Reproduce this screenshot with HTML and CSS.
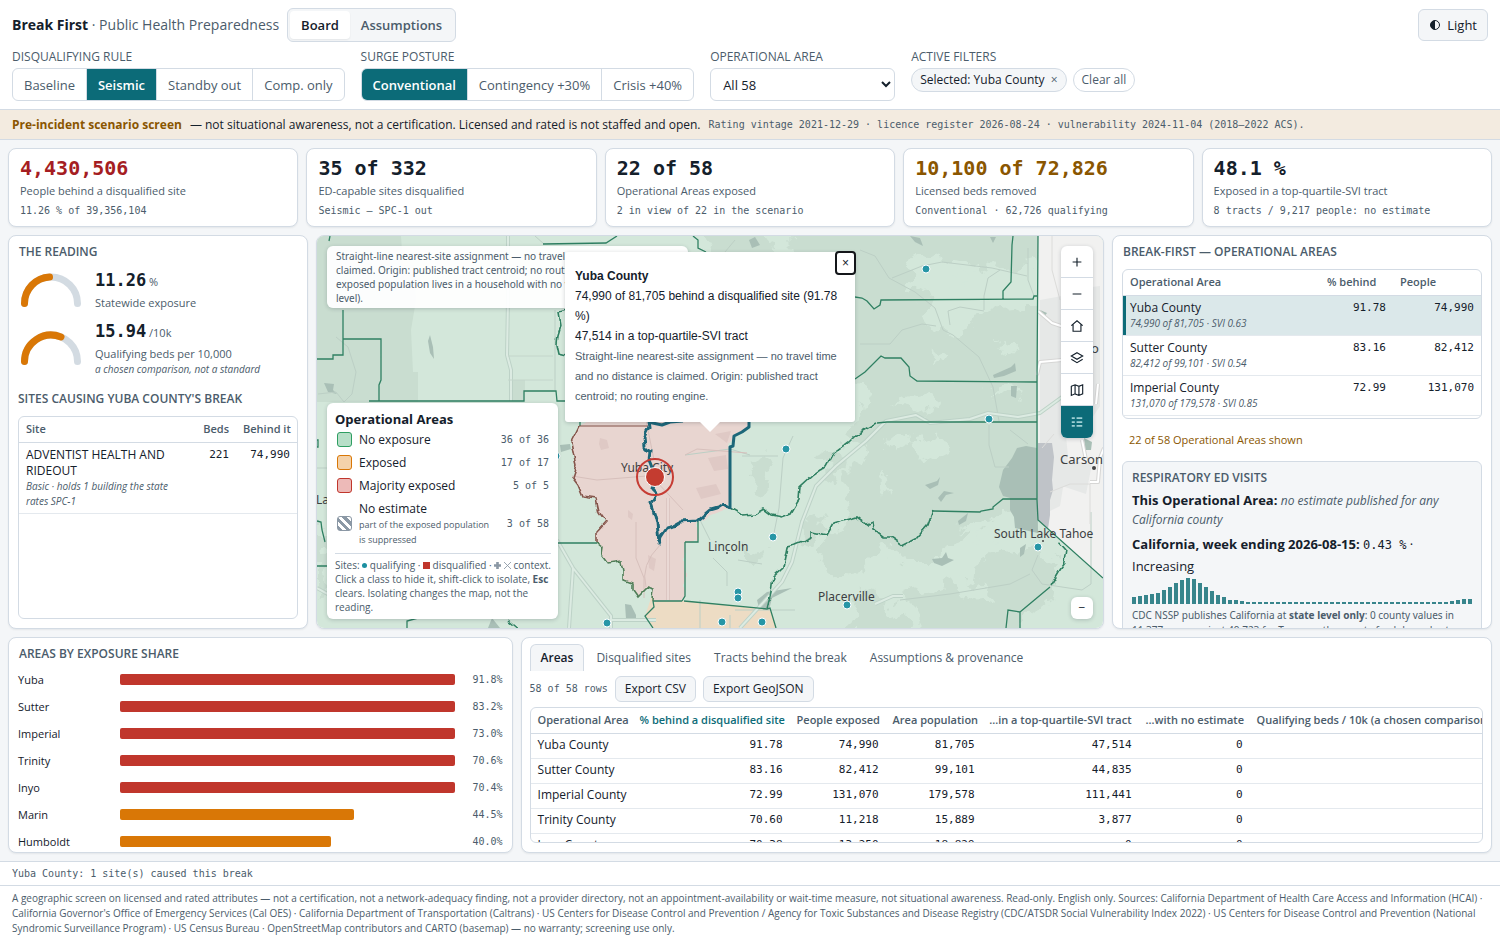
FILE: index.html
```html
<!DOCTYPE html>
<html lang="en">
<head>
<meta charset="utf-8">
<title>Break First · Public Health Preparedness</title>
<link rel="stylesheet" href="styles.css">
</head>
<body>
<header class="top">
  <div class="top-row">
    <h1 class="brand"><b>Break First</b> · Public Health Preparedness</h1>
    <nav class="switch"><button class="on">Board</button><button>Assumptions</button></nav>
    <button class="theme"><svg width="12" height="12" viewBox="0 0 12 12"><circle cx="6" cy="6" r="4.5" fill="none" stroke="currentColor"/><path d="M6 1.5a4.500 4.500 0 0 0 0 9z" fill="currentColor"/></svg>Light</button>
  </div>
  <div class="filters">
    <div class="field" role="group" aria-labelledby="l1"><span class="label" id="l1">DISQUALIFYING RULE</span>
      <div class="seg"><button>Baseline</button><button class="on">Seismic</button><button>Standby out</button><button>Comp. only</button></div></div>
    <div class="field" role="group" aria-labelledby="l2"><span class="label" id="l2">SURGE POSTURE</span>
      <div class="seg"><button class="on">Conventional</button><button>Contingency +30%</button><button>Crisis +40%</button></div></div>
    <div class="field"><label class="label" for="area">OPERATIONAL AREA</label>
      <select id="area" class="select"><option>All 58</option></select></div>
    <div class="field"><span class="label">ACTIVE FILTERS</span>
      <div class="chips"><button class="chip">Selected: Yuba County <span class="x">×</span></button><button class="chip clear">Clear all</button></div></div>
  </div>
</header>
<p class="banner"><b>Pre-incident scenario screen</b><span>— not situational awareness, not a certification. Licensed and rated is not staffed and open.</span><span class="mono">Rating vintage 2021-12-29 · licence register 2026-08-24 · vulnerability 2024-11-04 (2018–2022 ACS).</span></p>

<main class="board">
  <section class="kpis">
    <div class="card kpi"><strong class="red">4,430,506</strong><span>People behind a disqualified site</span><small>11.26 % of 39,356,104</small></div>
    <div class="card kpi"><strong>35 of 332</strong><span>ED-capable sites disqualified</span><small>Seismic — SPC-1 out</small></div>
    <div class="card kpi"><strong>22 of 58</strong><span>Operational Areas exposed</span><small>2 in view of 22 in the scenario</small></div>
    <div class="card kpi"><strong class="amber">10,100 of 72,826</strong><span>Licensed beds removed</span><small>Conventional · 62,726 qualifying</small></div>
    <div class="card kpi"><strong>48.1 %</strong><span>Exposed in a top-quartile-SVI tract</span><small>8 tracts / 9,217 people: no estimate</small></div>
  </section>

  <section class="middle">
    <div class="card reading">
      <h2>THE READING</h2>
      <div class="gauge">
        <svg width="60" height="35" viewBox="0 0 60 35" fill="none" stroke-width="7" stroke-linecap="round"><path d="M3.500 30.500a26.500 26.500 0 0 1 53 0" stroke="#d3dbe2"/><path d="M3.500 30.500a26.500 26.500 0 0 1 25-26.500" stroke="#d97706"/></svg>
        <div><p><strong>11.26</strong> %</p><p>Statewide exposure</p></div>
      </div>
      <div class="gauge">
        <svg width="60" height="35" viewBox="0 0 60 35" fill="none" stroke-width="7" stroke-linecap="round"><path d="M3.500 30.500a26.500 26.500 0 0 1 53 0" stroke="#d3dbe2"/><path d="M3.500 30.500a26.500 26.500 0 0 1 36.500-24.500" stroke="#d97706"/></svg>
        <div><p><strong>15.94</strong> /10k</p><p>Qualifying beds per 10,000</p><p class="em">a chosen comparison, not a standard</p></div>
      </div>
      <h2 class="sites-title">SITES CAUSING YUBA COUNTY'S BREAK</h2>
      <div class="table-box grow">
        <table class="sites">
          <thead><tr><th>Site</th><th class="c-beds">Beds</th><th class="c-behind">Behind it</th></tr></thead>
          <tbody><tr><td>ADVENTIST HEALTH AND RIDEOUT<span class="em">Basic · holds 1 building the state rates SPC-1</span></td><td>221</td><td>74,990</td></tr></tbody>
        </table>
      </div>
    </div>

    <div class="card map">
      <svg class="basemap" viewBox="317 236 786 392" preserveAspectRatio="xMidYMid slice">
        <defs>
          <filter id="rough" x="-5%" y="-5%" width="110%" height="110%" color-interpolation-filters="sRGB"><feTurbulence type="fractalNoise" baseFrequency="0.05" numOctaves="4" seed="4"/><feDisplacementMap in="SourceGraphic" scale="34" xChannelSelector="R" yChannelSelector="G"/></filter>
          <filter id="river" filterUnits="userSpaceOnUse" x="317" y="236" width="786" height="392" color-interpolation-filters="sRGB"><feTurbulence type="fractalNoise" baseFrequency="0.1" numOctaves="1" seed="8"/><feDisplacementMap in="SourceGraphic" scale="8" xChannelSelector="R" yChannelSelector="G"/></filter>
        </defs>
        <rect x="317" y="236" width="786" height="392" fill="#d3e7da"/>
        <path d="M317 236H401L403 265H414L416 300 411 330 413 372H418V402H317Z" fill="#c9ddd0"/>
        <path d="M513 380H525V401H513Z" fill="#c9ddd0"/>
        <g fill="#c9ddd0" filter="url(#rough)">
          <path d="M795 225H1045V262L1000 268 950 262 920 250 905 285 930 300 925 325 960 335 975 310 1045 305V505L1000 510 985 530 940 560 905 560 880 545 860 570 830 575 815 550 850 520 840 485 870 455 850 440 865 400 840 370 850 320 800 300Z"/>
          <path d="M1000 545 1060 560 1050 600 1000 640H940L900 600 960 580ZM860 590l30 10 20 30h-60zM700 225h60l20 30h-60zM755 455l20 20-10 20-15-10zM745 540l20 10-10 15zM800 520l20-5 10 15-25 15zM820 455l20-10 10 25-20 10z"/>
          <path d="M317 520l14 10-6 60-8 10z"/>
        </g>
        <g fill="#d3e7da" filter="url(#rough)">
          <path d="M880 440l20-8 15 10-20 15zM915 440l25-6 5 15-25 12zM958 275l20-8 40 8 5 15-50 10-20-5zM890 400l30-5 20 8-20 12zM960 530l30-8 20 10-25 10zM985 395l20-10 15 15zM880 470l12 10-10 20zM950 575l30 5 10 20-30-5zM1000 340l12 10-8 12zM935 345l10 8-12 15z"/>
        </g>
        <path d="M654 589 653 601 684 601 767 609 770 608 776 628H653L645 616Z" fill="#eddcc4"/>
        <path filter="url(#river)" d="M579 426 571 442 574 457 576 465 572 477 578 485 583 497 596 499 599 512 606 522 597 532 597 543 603 548 602 555 608 563 622 561 624 570 624 580 632 583 632 590 637 597 647 587 654 589 653 601H682L685 596V542H698V521L730 508V447L733 435 749 427V415H600Z" fill="#e8d5d0"/>
        <g fill="#dfc9c5"><path d="M600 438l7 2 2 8-8 2-2-6zM628 510l5 4-1 6-4-3zM708 458l18-3 2 14-14 2zM696 488l20-4 5 10-20 5zM715 434l16-3-4 12zM648 555l8 4-2 12-5-3z"/></g>
        <path d="M1038 236H1103V578L1038 520Z" fill="#f1f1f0"/>
        <g fill="#e6e8e7"><path d="M1040 300l22-4 8 60-8 40 6 60-8 50-20 10zM1070 290l30-4v120l-20 30-12-50zM1062 460l30 4-6 30-24-8z"/></g>
        <path d="M1037 448 1026 446 1017 448 1012 458 1003 470 999 487 1003 496 1010 498 1010 510 1014 517 1015 528 1038 533Z" fill="#a9bfb6"/>
        <path d="M1038 443 1052 443 1054 457 1052 480 1053 490 1050 500V515L1048 529 1038 520Z" fill="#bfc3c8"/>
        <g fill="#a9bfb6">
          <path d="M430 335l3 12 1 12-4-6-2-12zM324 383l10 1-1 6 4 4-9-2zM993 375l18-8 4-4 1 8-12 5-10 2zM1011 386l6 0-1 12-5-2zM925 485l12-4 3-4-2 8-8 4zM938 498l6-7 10 2-8 2-5 7zM958 521l10-8-2 8-7 4zM932 559l10-1 4-6 2 6 6 2-12 6-8-3zM1020 548l6-4-2 10-4 3zM749 240l6-3 5 8-8 3zM910 236l10 2 3 8-8-4zM990 237h6l-3 6zM757 600l10-8 25-4-20 10-3 12-10-2zM625 604l6 1 5 10v4h-10zM560 445l10-1 1 5-10 3zM492 618l8 10h-12zM1040 310l7 3-3 4zM1084 438l8 4-1 8h-6z"/>
        </g>
        <g fill="none" stroke="#bccfc5" stroke-width="1">
          <path d="M336 337l12 10 8 25-4 22-8 8-8-10-18 2M317 468l16 0M535 236l9 8M860 250l15 6 14 22 26 14 20 16 8 22 10 5 26 22 14 30 6 34M892 278l30-12 20-4 50 6 35 8M984 310v-14l4-18 12-8M860 344l30 0 12-14 20-6 14 2M950 325l-2-14 12-4 24 4M1028 248v32l6 16M989 425l0 20 6 22 14 0M1010 430l18 14M793 436l-10 22-4 50-6 30M685 455l45-6 20 6M742 456h36M700 520l10 20M713 558l14 14v14M555 310v80M735 240l-10 12M900 600l50-6 60-10 20-10M1038 555l-6 15 10 14 40 6 9-6V512M738 560l24 4M735 610h60M730 615v15M700 600v30"/>
        </g>
        <g fill="none" stroke="#d7c0bc"><path d="M572 476l25 4 50-4M636 522v36l8 20v20M668 498v102M654 460l-8-40M655 480l28 30M685 455l12-6 50 4M660 545q-20 20-14 42"/></g>
        <g fill="none" stroke-linejoin="round">
          <path d="M508 236V300L507 355 511 370V401M557 540l16 28 38 48v12M573 568l-4 60M740 628l20-22 22-24 10-20 10-40 14-36 20-20 30-25 20-20 30-6 14 8 40-4 18-6 30 4 22-4 22-16 12-6-4-20 10-6M611 620h45M317 588l25 14M875 604l18-8h10" stroke="#bdd2c7" stroke-width="4"/>
          <path d="M508 236V300L507 355 511 370V401M557 540l16 28 38 48v12M573 568l-4 60M740 628l20-22 22-24 10-20 10-40 14-36 20-20 30-25 20-20 30-6 14 8 40-4 18-6 30 4 22-4 22-16 12-6-4-20 10-6M611 620h45M317 588l25 14M875 604l18-8h10" stroke="#dcebe2" stroke-width="2"/>
          <path d="M508 380h45M508 356h45" stroke="#c4d6cb"/>
          <path d="M668 498v102" stroke="#dcc6c2" stroke-width="4"/><path d="M668 498v102" stroke="#ead9d5" stroke-width="2"/>
          <path d="M1038 311l14 12 12 4M1037 375l3-13 22-2M1082 440l4 20M1098 384l-2 20M1090 482h8l2-24 4-10" stroke="#d6d6d5" stroke-width="4"/>
          <path d="M1038 311l14 12 12 4M1037 375l3-13 22-2M1082 440l4 20M1098 384l-2 20M1090 482h8l2-24 4-10" stroke="#fff" stroke-width="2"/>
          <path d="M1042 448l12-14M1050 492l20-8 20 0v40M1060 300l-8-30V236" stroke="#dcdcda"/>
        </g>
        <g fill="none" stroke="#2f8062" stroke-width="1.300">
          <path d="M329 241 330 236M343 310V339H381V380L379 385V401M343 339V355H333V359H317M369 401H524V391H556L557 401H580V426M543 244 606 243 617 236M557 543H597M317 566H327M407 628V621L418 618M317 440h1v7h-1M317 521l4 1 1 8 3 12"/>
          <path d="M693 236 698 240V248L706 252M855 297 862 298 867 301 874 309 880 305 881 300 1033 299 1034 296H1037M1013 236 1012 245 1011 282 1003 291V299M855 379 865 372 881 356 885 358H901L909 367 910 376 917 381 1037 382M877 423 887 422H1037M933 511 980 512 981 511 993 509V507L1003 499H1037M1038 236 1037 383V500L1038 520 1103 578M1020 612V628M1020 612 1050 587M1020 612 1008 610 1006 628M685 542H698V521M682 601H653M684 601 767 609 770 608 776 628M653 601 654 607 645 616 653 628M685 542V596L682 601"/>
          <path filter="url(#river)" stroke-width="1.600" d="M567 311 559 313 561 325 558 335 557 345 559 354 567 356M508 620l12 10M730 508 737 512 743 516 753 515 764 509 772 515 782 517 790 514 799 499 800 487 813 475 827 465 833 454 848 443 857 434 877 423M767 609 771 593 773 577 783 568 787 547 795 545 812 538V532L827 535 833 524 857 517 868 525 873 523 874 530 883 537H890L903 546 915 540 928 525 933 511M1060 542 1067 550 1065 563 1060 570 1050 587"/>
        </g>
        <path d="M597 543 603 548 602 555 608 563 622 561 624 570 624 580 632 583 632 590 637 597 647 587 654 589 653 601" fill="none" stroke="#4f7d57" stroke-width="1.600" filter="url(#river)"/>
        <path d="M579 426 571 442 574 457 576 465 572 477 578 485 583 497 596 499 599 512 606 522 597 532 597 543" fill="none" stroke="#85554b" stroke-width="1.600" filter="url(#river)"/>
        <path d="M579 426H648" stroke="#85554b" fill="none"/>
        <g fill="#3d3f42" class="town"><text x="621" y="472">Yuba City</text><text x="708" y="551">Lincoln</text><text x="818" y="601">Placerville</text><text x="994" y="538">South Lake Tahoe</text><text x="1060" y="464" class="big">Carson</text><text x="316" y="504">La</text><text x="1091" y="353" class="big">o</text></g>
        <circle cx="1094" cy="468" r="2" fill="#444"/><circle cx="727" cy="553" r="1" fill="#444"/><circle cx="1043" cy="541" r="1" fill="#444"/>
        <g fill="none" stroke="#1c6779" stroke-width="3" stroke-linejoin="round">
          <path filter="url(#river)" d="M648 420 649 427 644 437 645 447 650 452 649 460 653 470 655 477 652 488 657 493 651 503 655 515 657 523 659 543 661 537 667 528 673 526 680 522 697 521 710 510 717 508 723 504 730 508"/>
          <path d="M730 509V447L733 446 734 436 742 432 749 427V420M648 422 662 425 670 422 683 421"/>
        </g>
        <g fill="#2796a6" stroke="#fff"><circle cx="926" cy="269" r="4"/><circle cx="786" cy="449" r="4"/><circle cx="989" cy="419" r="4"/><circle cx="773" cy="537" r="4"/><circle cx="738" cy="592" r="4"/><circle cx="738" cy="598" r="4"/><circle cx="607" cy="623" r="4"/><circle cx="722" cy="622" r="4"/><circle cx="762" cy="622" r="4"/><circle cx="847" cy="605" r="4"/><circle cx="1038" cy="547" r="4"/><circle cx="556" cy="456" r="4"/></g>
        <circle cx="655" cy="477" r="18" fill="none" stroke="#c63c34" stroke-width="2"/><circle cx="655" cy="477" r="9.500" fill="#c43c30" stroke="#fff"/>
      </svg>
      <p class="map-note">Straight-line nearest-site assignment — no travel time and no distance is<br>claimed. Origin: published tract centroid; no routing engine. 6 % of the<br>exposed population lives in a household with no vehicle (county<br>level).</p>
      <div class="popup">
        <h3>Yuba County</h3>
        <p>74,990 of 81,705 behind a disqualified site (91.78 %)</p>
        <p>47,514 in a top-quartile-SVI tract</p>
        <p class="fine">Straight-line nearest-site assignment — no travel time and no distance is claimed. Origin: published tract centroid; no routing engine.</p>
        <button class="close" aria-label="Close">×</button>
      </div>
      <div class="legend">
        <h3>Operational Areas</h3>
        <button class="key"><i class="sw none"></i><span>No exposure</span><small>36 of 36</small></button>
        <button class="key"><i class="sw exposed"></i><span>Exposed</span><small>17 of 17</small></button>
        <button class="key"><i class="sw major"></i><span>Majority exposed</span><small>5 of 5</small></button>
        <button class="key"><i class="sw hatch"></i><span>No estimate<em>part of the exposed population<br>is suppressed</em></span><small>3 of 58</small></button>
        <p>Sites: <i class="dot"></i> qualifying · <i class="square"></i> disqualified · <svg width="7" height="7" viewBox="0 0 8 8"><path d="M4 0v8M0 4h8" stroke="#8b98a5" stroke-width="3"/></svg> <svg width="7" height="7" viewBox="0 0 8 8"><path d="M0 0l8 8M8 0L0 8" stroke="#8b98a5"/></svg> context.<br>Click a class to hide it, shift-click to isolate, <b>Esc</b><br>clears. Isolating changes the map, not the<br>reading.</p>
      </div>
      <div class="tools">
        <button aria-label="Zoom in"><svg viewBox="0 0 16 16"><path d="M8 3v10M3 8h10"/></svg></button>
        <button aria-label="Zoom out"><svg viewBox="0 0 16 16"><path d="M3 8h10"/></svg></button>
        <button aria-label="Home"><svg viewBox="0 0 16 16"><path d="M1.500 7.500 8 2l6.500 5.500M3.500 6V14h9V6"/></svg></button>
        <button aria-label="Layers"><svg viewBox="0 0 16 16"><path d="M8 2 14.500 5.800 8 9.500 1.500 5.800ZM1.500 9.500 8 13.300l6.500-3.800"/></svg></button>
        <button aria-label="Basemap"><svg viewBox="0 0 16 16"><path d="M1.500 3.800l4.300-1.800 4.400 1.800 4.300-1.800v10.400l-4.300 1.800-4.400-1.800-4.300 1.800ZM5.800 2v10.400M10.200 3.800v10.400"/></svg></button>
        <button class="on" aria-label="Legend"><svg viewBox="0 0 16 16"><path d="M2 3.500h3.500M7.500 3.500H14M2 8h3.500M7.500 8H14M2 12.500h3.500M7.500 12.500H14"/></svg></button>
      </div>
      <button class="collapse" aria-label="Collapse">−</button>
    </div>

    <div class="card ranking">
      <h2>BREAK-FIRST — OPERATIONAL AREAS</h2>
      <div class="table-box rank-box">
        <table class="rank">
          <thead><tr><th>Operational Area</th><th class="c-pct">% behind</th><th class="c-people">People</th></tr></thead>
          <tbody>
            <tr class="sel"><td>Yuba County<span class="em">74,990 of 81,705 · SVI 0.63</span></td><td>91.78</td><td>74,990</td></tr>
            <tr><td>Sutter County<span class="em">82,412 of 99,101 · SVI 0.54</span></td><td>83.16</td><td>82,412</td></tr>
            <tr><td>Imperial County<span class="em">131,070 of 179,578 · SVI 0.85</span></td><td>72.99</td><td>131,070</td></tr>
          </tbody>
        </table>
      </div>
      <p class="shown">22 of 58 Operational Areas shown</p>
      <div class="resp">
        <h2>RESPIRATORY ED VISITS</h2>
        <p><b>This Operational Area:</b> <span class="em">no estimate published for any California county</span></p>
        <p class="week"><b>California, week ending 2026-08-15:</b> <span class="mono">0.43 %</span> ·<br>Increasing</p>
        <div class="spark"><i style="height:7px"></i><i style="height:8px"></i><i style="height:9px"></i><i style="height:10px"></i><i style="height:11px"></i><i style="height:14px"></i><i style="height:17px"></i><i style="height:21px"></i><i style="height:24px"></i><i style="height:26px"></i><i style="height:25px"></i><i style="height:21px"></i><i style="height:17px"></i><i style="height:13px"></i><i style="height:9px"></i><i style="height:7px"></i><i style="height:4px"></i><i style="height:4px"></i><i style="height:3px"></i><i></i><i></i><i></i><i></i><i></i><i></i><i></i><i></i><i></i><i></i><i></i><i></i><i></i><i></i><i></i><i></i><i></i><i></i><i></i><i></i><i></i><i></i><i></i><i></i><i></i><i></i><i></i><i></i><i></i><i></i><i></i><i></i><i></i><i></i><i style="height:3px"></i><i style="height:4px"></i><i style="height:5px"></i><i style="height:5px"></i></div>
        <p class="src">CDC NSSP publishes California at <b>state level only</b>: 0 county values in 11,377 rows against 49,723 for Texas, so the county feed degrades to the state figure.</p>
      </div>
    </div>
  </section>

  <section class="lower">
    <div class="card shares">
      <h2>AREAS BY EXPOSURE SHARE</h2>
      <div class="bar"><span>Yuba</span><div><i style="width:100%"></i></div><small>91.8%</small></div>
      <div class="bar"><span>Sutter</span><div><i style="width:100%"></i></div><small>83.2%</small></div>
      <div class="bar"><span>Imperial</span><div><i style="width:100%"></i></div><small>73.0%</small></div>
      <div class="bar"><span>Trinity</span><div><i style="width:100%"></i></div><small>70.6%</small></div>
      <div class="bar"><span>Inyo</span><div><i style="width:100%"></i></div><small>70.4%</small></div>
      <div class="bar mid"><span>Marin</span><div><i style="width:70%"></i></div><small>44.5%</small></div>
      <div class="bar mid"><span>Humboldt</span><div><i style="width:63%"></i></div><small>40.0%</small></div>
    </div>
    <div class="card data">
      <nav class="tabs"><button class="on">Areas</button><button>Disqualified sites</button><button>Tracts behind the break</button><button>Assumptions &amp; provenance</button></nav>
      <div class="actions"><span class="mono">58 of 58 rows</span><button>Export CSV</button><button>Export GeoJSON</button></div>
      <div class="table-box grow">
        <table class="areas">
          <colgroup><col class="w1"><col class="w2"><col class="w3"><col class="w3"><col class="w2"><col class="w4"><col class="w5"></colgroup>
          <thead><tr><th>Operational Area</th><th class="sorted">% behind a disqualified site</th><th>People exposed</th><th>Area population</th><th>…in a top-quartile-SVI tract</th><th>…with no estimate</th><th>Qualifying beds / 10k (a chosen comparison)</th></tr></thead>
          <tbody>
            <tr><td>Yuba County</td><td>91.78</td><td>74,990</td><td>81,705</td><td>47,514</td><td>0</td><td></td></tr>
            <tr><td>Sutter County</td><td>83.16</td><td>82,412</td><td>99,101</td><td>44,835</td><td>0</td><td></td></tr>
            <tr><td>Imperial County</td><td>72.99</td><td>131,070</td><td>179,578</td><td>111,441</td><td>0</td><td></td></tr>
            <tr><td>Trinity County</td><td>70.60</td><td>11,218</td><td>15,889</td><td>3,877</td><td>0</td><td></td></tr>
            <tr><td>Inyo County</td><td>70.38</td><td>13,250</td><td>18,829</td><td>0</td><td>0</td><td></td></tr>
          </tbody>
        </table>
      </div>
    </div>
  </section>
</main>
<p class="status">Yuba County: 1 site(s) caused this break</p>
<footer class="foot">A geographic screen on licensed and rated attributes — not a certification, not a network-adequacy finding, not a provider directory, not an appointment-availability or wait-time measure, not situational awareness. Read-only. English only. Sources: California Department of Health Care Access and Information (HCAI) · California Governor's Office of Emergency Services (Cal OES) · California Department of Transportation (Caltrans) · US Centers for Disease Control and Prevention / Agency for Toxic Substances and Disease Registry (CDC/ATSDR Social Vulnerability Index 2022) · US Centers for Disease Control and Prevention (National Syndromic Surveillance Program) · US Census Bureau · OpenStreetMap contributors and CARTO (basemap) — no warranty; screening use only.</footer>
</body>
</html>
```
FILE: styles.css
```css
:root {
  --ink: #14202b;
  --muted: #4b5c6b;
  --line: #d3dbe4;
  --teal: #0c6b78;
  --soft: #f4f6f8;
  --sans: "Open Sans", "Noto Sans", sans-serif;
  --mono: "DejaVu Sans Mono", monospace;
}
* { box-sizing: border-box; margin: 0; }
body { height: 100vh; display: flex; flex-direction: column; overflow: hidden; font: 12px/16px var(--sans); color: var(--ink); background: var(--soft); }
button { font: inherit; color: inherit; background: none; border: 0; padding: 0; cursor: pointer; white-space: nowrap; }
h2 { font-size: 12px; line-height: 16px; font-weight: 600; color: var(--muted); white-space: nowrap; }
.mono { font-family: var(--mono); font-size: 10px; }
.em { font-size: 10px; font-style: italic; color: var(--muted); }

.top { padding: 8px 12px; background: #fff; border-bottom: 1px solid var(--line); }
.top-row { display: flex; align-items: center; gap: 8px; }
.brand { font-size: 14px; line-height: 20px; font-weight: 400; color: var(--muted); }
.brand b { color: var(--ink); }
.switch { display: flex; padding: 2px; border: 1px solid var(--line); border-radius: 6px; background: var(--soft); }
.switch button { padding: 0 11px; height: 28px; font-size: 13px; font-weight: 600; color: var(--muted); border-radius: 4px; }
.switch .on { background: #fff; color: var(--ink); box-shadow: 0 1px 2px #0001; }
.theme { display: flex; align-items: center; gap: 6px; margin-left: auto; height: 32px; padding: 0 10px; font-size: 13px; border: 1px solid var(--line); border-radius: 6px; background: var(--soft); }
.filters { display: flex; gap: 16px; margin-top: 7px; }
.field { display: flex; flex-direction: column; gap: 3px; }
.label { font-size: 12px; line-height: 16px; color: var(--muted); }
.seg { display: flex; border: 1px solid var(--line); border-radius: 6px; overflow: hidden; }
.seg button { height: 31px; padding: 0 11px; font-size: 13px; color: var(--muted); }
.seg button + button { border-left: 1px solid var(--line); }
.seg .on { background: var(--teal); color: #fff; font-weight: 600; }
.select { width: 185px; height: 33px; padding: 0 8px; font: 13px/20px var(--sans); color: var(--ink); background: #fff; border: 1px solid var(--line); border-radius: 6px; }
.chips { display: flex; gap: 6px; }
.chip { height: 24px; padding: 0 8px; font-size: 12px; border: 1px solid var(--line); border-radius: 12px; background: var(--soft); }
.chip .x { margin-left: 3px; color: var(--muted); }
.clear { background: #fff; color: var(--muted); }

.banner { display: flex; align-items: center; gap: 8px; padding: 7px 12px 6px; background: #f3ebe0; border-bottom: 1px solid var(--line); white-space: nowrap; }
.banner b { color: #8a5600; }
.banner .mono { color: var(--muted); }

.board { flex: 1; min-height: 0; display: flex; flex-direction: column; gap: 8px; padding: 8px; }
.card { background: #fff; border: 1px solid var(--line); border-radius: 8px; box-shadow: 0 1px 2px #14202b12; }
.kpis { display: grid; grid-template-columns: repeat(5, 1fr); gap: 8px; }
.kpi { display: flex; flex-direction: column; padding: 6px 11px 5px; color: var(--muted); }
.kpi strong { font: bold 20px/26px var(--mono); color: var(--ink); }
.kpi .red { color: #a51d22; }
.kpi .amber { color: #8a5600; }
.kpi span { font-size: 11px; line-height: 20px; }
.kpi small { font: 10px/20px var(--mono); }

.middle { flex: 394; min-height: 0; display: grid; grid-template-columns: 300px minmax(0, 1fr) 380px; gap: 8px; }
.lower { flex: 216; min-height: 0; display: grid; grid-template-columns: 34% minmax(0, 1fr); gap: 8px; }
.middle > *, .lower > * { min-height: 0; overflow: hidden; }

.reading { display: flex; flex-direction: column; padding: 8px 9px 9px; }
.reading h2 { padding-left: 1px; }
.gauge { display: flex; align-items: center; gap: 14px; padding: 0 3px; margin-top: 9px; color: var(--muted); font-size: 11px; }
.gauge strong { font: bold 17px/20px var(--mono); color: var(--ink); }
.gauge p { line-height: 16px; }
.gauge p:first-child { line-height: 26px; }
.gauge .em { line-height: 14px; }
.reading .sites-title { margin: 15px 0 9px; padding: 0; }
.table-box { border: 1px solid var(--line); border-radius: 6px; overflow: hidden; }
.grow { flex: 1; min-height: 0; }
table { width: 100%; border-collapse: collapse; table-layout: fixed; }
th { padding: 0 7px; height: 25px; font-size: 11px; line-height: 16px; font-weight: 600; color: var(--muted); text-align: right; white-space: nowrap; border-bottom: 1px solid var(--line); }
td { padding: 4px 7px; text-align: right; vertical-align: top; border-bottom: 1px solid #e4e9ee; font: 11px/16px var(--mono); }
th:first-child { text-align: left; }
td:first-child { text-align: left; font: 12px/16px var(--sans); }
td .em { display: block; line-height: 15px; }
.sites .c-beds { width: 47px; }
.sites .c-behind { width: 61px; }

.map { position: relative; }
.basemap { position: absolute; inset: 0; width: 100%; height: 100%; }
.town { font: 12px "Noto Sans", sans-serif; }
.town .big { font-size: 13px; }
.map-note, .popup, .legend, .tools, .collapse { position: absolute; background: #fff; border-radius: 6px; box-shadow: 0 1px 4px #14202b33; }
.map-note { left: 10px; top: 10px; width: 361px; padding: 3px 9px; font: 10px/14px "Noto Sans", sans-serif; color: var(--muted); background: #fffffff0; white-space: nowrap; }
.popup { left: 248px; top: 16px; width: 290px; padding: 14px 10px 16px; font: 12px/20px "Liberation Sans", Arial, sans-serif; border-radius: 3px; }
.popup::after { content: ""; position: absolute; left: 50%; top: 100%; margin-left: -10px; border: 10px solid transparent; border-top-color: #fff; border-bottom: 0; }
.popup h3 { font-size: 12px; }
.popup .fine { font-size: 11px; color: var(--muted); }
.close { position: absolute; right: -1px; top: -1px; width: 21px; height: 24px; background: #fff; border: 2px solid #14161a; border-radius: 4px; line-height: 18px; }
.legend { left: 10px; bottom: 9px; width: 231px; padding: 7px 7px 5px 8px; display: flex; flex-direction: column; }
.legend h3 { margin-bottom: 3px; font-size: 13px; line-height: 18px; }
.key { display: flex; align-items: center; gap: 7px; padding: 0 2px; margin-bottom: 6px; text-align: left; }
.key span { flex: 1; line-height: 17px; }
.key em { display: block; font-size: 9px; line-height: 15px; font-style: normal; color: var(--muted); }
.key small { font: 10px/16px var(--mono); color: var(--muted); }
.sw { width: 15px; height: 15px; border: 1px solid; border-radius: 3px; }
.sw.none { background: #b7dfc8; border-color: #2e9e62; }
.sw.exposed { background: #f4d2aa; border-color: #d97706; }
.sw.major { background: #edbab8; border-color: #c0362c; }
.sw.hatch { border-color: #8b98a5; background: repeating-linear-gradient(45deg, #8b98a5 0 3px, #fff 3px 6px); }
.legend p { padding-top: 4px; border-top: 1px solid var(--line); font-size: 10px; line-height: 14px; color: var(--muted); white-space: nowrap; }
.dot, .square { display: inline-block; width: 5px; height: 5px; border-radius: 50%; background: #1b8fa0; vertical-align: 1px; }
.square { width: 7px; height: 7px; border-radius: 0; background: #c0362c; vertical-align: 0; }
.tools { right: 10px; top: 10px; width: 32px; overflow: hidden; }
.tools button { display: grid; place-items: center; width: 32px; height: 32px; color: var(--ink); border-bottom: 1px solid var(--line); }
.tools .on { background: var(--teal); color: #9fd0d4; border: 0; }
.tools svg { width: 14px; height: 14px; fill: none; stroke: currentColor; stroke-width: 1.3; }
.tools .on svg { stroke-width: 2; }
.collapse { right: 10px; bottom: 9px; width: 22px; height: 22px; }

.ranking { display: flex; flex-direction: column; padding: 8px 9px 0; }
.ranking > * { flex: none; }
.ranking h2 { padding-left: 1px; }
.rank-box { padding-bottom: 2px; margin-top: 9px; }
.rank th { text-align: left; }
.rank .c-pct { width: 73px; }
.rank .c-people { width: 88px; }
.sel td { background: #dbe8ea; }
.sel td:first-child { box-shadow: inset 3px 0 var(--teal); }
.shown { margin: 13px 7px; font-size: 11px; color: #8a5600; }
.resp { padding: 8px 9px; background: var(--soft); border: 1px solid var(--line); border-radius: 6px; font-size: 13px; line-height: 18px; }
.resp h2 { padding: 0; margin-bottom: 5px; }
.resp .em { font-size: 12px; }
.week { margin-top: 4px; line-height: 22px; }
.resp .mono { font-size: 12px; line-height: 16px; }
.spark { display: flex; align-items: flex-end; gap: 2px; height: 27px; }
.spark i { flex: 1; height: 2px; background: #37858c; }
.src { margin-top: 4px; font: 10px/15px "Noto Sans", sans-serif; color: var(--muted); }

.shares { padding: 8px 9px; }
.shares h2 { padding-left: 1px; margin-bottom: 4px; }
.bar { display: flex; align-items: center; height: 27px; font-size: 11px; }
.bar span { width: 102px; }
.bar div { flex: 1; margin-right: 8px; }
.bar i { display: block; height: 11px; border-radius: 2px; background: #c0362c; }
.bar.mid i { background: #d97706; }
.bar small { width: 40px; font: 10px/16px var(--mono); text-align: right; color: var(--muted); }

.data { display: flex; flex-direction: column; padding: 6px 8px 9px; }
.tabs { display: flex; gap: 1px; }
.tabs button { height: 27px; padding: 0 10px; color: var(--muted); border: 1px solid transparent; }
.tabs .on { color: var(--ink); font-weight: 600; background: var(--soft); border-color: var(--line); border-bottom: 0; border-radius: 6px 6px 0 0; }
.actions { display: flex; align-items: center; gap: 7px; margin: 5px 0; }
.actions span { color: var(--muted); }
.actions button { height: 26px; padding: 0 9px; border: 1px solid var(--line); border-radius: 6px; background: var(--soft); }
.areas { width: 1212px; }
.areas td { padding: 3px 7px 5px; white-space: nowrap; }
.areas .w1 { width: 102px; }
.areas .w2 { width: 157px; }
.areas .w3 { width: 96px; }
.areas .w4 { width: 111px; }
.areas th:last-child { text-align: left; }
.areas .sorted { color: var(--teal); }

.status { padding: 4px 12px 3px; background: #fff; border-top: 1px solid var(--line); font: 10px/16px var(--mono); color: var(--muted); }
.foot { padding: 5px 12px 4px; background: #fff; border-top: 1px solid var(--line); font-size: 10px; line-height: 15px; color: var(--muted); }
```
